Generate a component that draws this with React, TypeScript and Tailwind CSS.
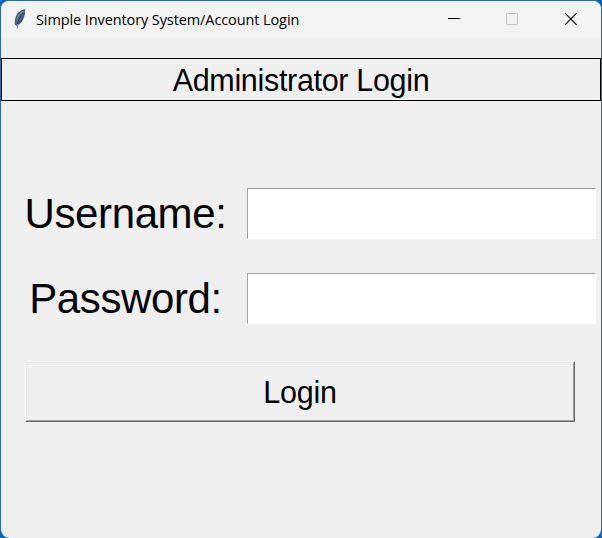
function Feather() {
  return (
    <svg className="ml-[12px] mt-[-1px] shrink-0" width="14" height="21" viewBox="0 0 14 21">
      <path d="M11.500.9C7 2 3.500 6 2.600 10.500L2.300 15l1.200 1C7.500 15 10.200 9.500 11.300 5Z" fill="#3f6795" stroke="#505860" strokeWidth="1.200" />
      <path d="M10.500 2C7 4 4.500 7 3.600 11.500" fill="none" stroke="#7f8b98" strokeWidth="1.100" />
      <path d="M9.800 4.500C7 8 4.700 12 4 17" fill="none" stroke="#2b3a4c" strokeWidth="1" />
      <path d="M4.500 15V19.500" stroke="#888" strokeWidth="1.200" />
    </svg>
  );
}

function TitleBar() {
  return (
    <header className="flex h-[37px] items-center bg-[#f3f3f3]">
      <Feather />
      <span className="ml-[9px] whitespace-nowrap font-['Open_Sans','Noto_Sans',sans-serif] text-[14.500px] leading-[20px] tracking-[-0.100px] text-black">
        Simple Inventory System/Account Login
      </span>
      <svg className="ml-auto mr-[20px] mt-[-1px] shrink-0" width="134" height="14" viewBox="0 0 134 14">
        <path d="M1 6.500h12" stroke="#000" />
        <rect x="59.500" y="1.500" width="11" height="11" rx="1" fill="none" stroke="#c4c4c4" />
        <path d="M118 1.200l11.600 11.600M129.600 1.200L118 12.800" stroke="#111" strokeWidth="1.200" />
      </svg>
    </header>
  );
}

function Field({ label, type }: { label: string; type: string }) {
  return (
    <label className="flex h-[51px] items-center">
      <span className="w-[246px] shrink-0 text-center text-[42px] leading-[50px] tracking-[-0.400px]">
        <span className="mr-[-3px] block">{label}</span>
      </span>
      <input
        type={type}
        className="h-[51px] w-[349px] border border-white border-l-[#a0a0a0] border-t-[#a0a0a0] bg-white px-1 text-[40px] outline-none"
      />
    </label>
  );
}

export default function App() {
  return (
    <div className="h-[538px] w-[602px] overflow-hidden bg-[#0067c0]">
      <main className="flex h-full flex-col overflow-hidden rounded-[9px] border border-b-0 border-[#2d6aa5] bg-[#f0f0f0] font-['Liberation_Sans',Arial,sans-serif] text-black">
        <TitleBar />
        <h1 className="mt-[20px] h-[43px] border border-black text-center text-[30.500px] leading-[43px] tracking-[-0.320px]">
          Administrator Login
        </h1>
        <form className="mt-[87px] flex flex-col" onSubmit={(e) => e.preventDefault()}>
          <Field label="Username:" type="text" />
          <div className="h-[34px]" />
          <Field label="Password:" type="password" />
          <button className="ml-[24px] mt-[37px] h-[61px] w-[550px] border border-b-[#696969] border-l-white border-r-[#696969] border-t-white text-[30.500px] tracking-[-0.250px]">
            <span className="flex h-full items-center justify-center border border-b-[#a0a0a0] border-l-[#e3e3e3] border-r-[#a0a0a0] border-t-[#e3e3e3] pt-[2px]">
              Login
            </span>
          </button>
        </form>
      </main>
    </div>
  );
}
